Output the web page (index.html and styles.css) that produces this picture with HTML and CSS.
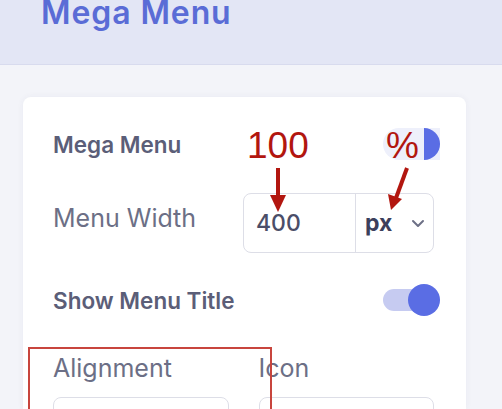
FILE: index.html
```html
<!DOCTYPE html>
<html lang="en">
<head>
    <meta charset="UTF-8">
    <meta name="viewport" content="width=device-width, initial-scale=1.0">
    <title>Mega Menu</title>
    <link rel="stylesheet" href="styles.css">
</head>
<body>
    <div class="header">
        <h1>Mega Menu</h1>
    </div>
    <div class="content">
        <div class="card">
            <div class="row row-top">
                <span class="label-bold">Mega Menu</span>
                <span class="toggle toggle-half"><span class="knob"></span></span>
            </div>
            <div class="row row-width">
                <span class="label">Menu Width</span>
                <div class="input-group">
                    <span class="input-value">400</span>
                    <span class="input-unit">
                        <b>px</b>
                        <svg width="14" height="9" viewBox="0 0 14 9"><path d="M2 2l5 5 5-5" fill="none" stroke="#6d7086" stroke-width="2" stroke-linecap="round" stroke-linejoin="round"/></svg>
                    </span>
                </div>
            </div>
            <div class="row row-title">
                <span class="label-bold">Show Menu Title</span>
                <span class="toggle toggle-on"><span class="knob"></span></span>
            </div>
            <div class="fields">
                <div class="field">
                    <span class="label">Alignment</span>
                    <div class="select"></div>
                </div>
                <div class="field">
                    <span class="label">Icon</span>
                    <div class="select"></div>
                </div>
            </div>
        </div>
    </div>

    <!-- annotations drawn over the screenshot -->
    <div class="note-box"></div>
    <span class="note note-100">100</span>
    <span class="note note-pct">%</span>
    <svg class="arrows" width="502" height="409" viewBox="0 0 502 409">
        <path d="M278 168v28" stroke="#b2160f" stroke-width="4"/>
        <path d="M270 195h16l-8 17z" fill="#b2160f"/>
        <path d="M407 168l-11 30" stroke="#b2160f" stroke-width="4"/>
        <path d="M388 194l14 5-11 11z" fill="#b2160f"/>
    </svg>
</body>
</html>
```

FILE: styles.css
```css
body {
    margin: 0;
    padding: 0;
    background-color: #f3f4f9;
    font-family: Inter, Roboto, sans-serif;
    overflow: hidden;
    height: 409px;
}
.header {
    height: 64px;
    padding: 0 41px;
    background-color: #e3e6f5;
    border-bottom: 1px solid #d8dbee;
    overflow: hidden;
}
.header h1 {
    margin: -2px 0 0;
    font-size: 32px;
    line-height: 30px;
    font-weight: 600;
    letter-spacing: 0.9px;
    color: #5a6cd6;
}
.content {
    padding: 32px 36px 0 23px;
}
.card {
    background-color: #ffffff;
    border-radius: 8px 8px 0 0;
    box-shadow: 0 0 6px rgba(60, 70, 120, 0.06);
    padding: 28px 26px 0 30px;
    height: 312px;
    box-sizing: border-box;
    overflow: hidden;
}
.row {
    display: flex;
    align-items: center;
    justify-content: space-between;
}
.row-top {
    height: 38px;
}
.row-width {
    margin-top: 30px;
    height: 60px;
}
.row-title {
    margin-top: 31px;
    height: 32px;
}
.label-bold {
    font-size: 22.5px;
    font-weight: 600;
    color: #5b5e78;
}
.label {
    font-size: 25px;
    line-height: 30px;
    color: #6c6f86;
}
.row-width .label {
    padding-bottom: 10px;
}
.toggle {
    position: relative;
    display: block;
    width: 57px;
    height: 32px;
}
.toggle-half {
    background-color: #eef0fb;
    border-radius: 16px 0 0 16px;
}
.toggle-half .knob {
    position: absolute;
    right: 0;
    top: 0;
    width: 16px;
    height: 32px;
    border-radius: 0 16px 16px 0;
    background-color: #5a6de4;
}
.toggle-on::before {
    content: '';
    position: absolute;
    left: 0;
    top: 5px;
    width: 40px;
    height: 22px;
    border-radius: 11px;
    background-color: #c6cbf1;
}
.toggle-on .knob {
    position: absolute;
    right: 0;
    top: 0;
    width: 32px;
    height: 32px;
    border-radius: 50%;
    background-color: #5a6de4;
}
.input-group {
    display: flex;
    width: 191px;
    height: 60px;
    margin-right: 6px;
    box-sizing: border-box;
    border: 1.5px solid #dddee7;
    border-radius: 8px;
}
.input-value {
    width: 112px;
    padding-left: 12px;
    box-sizing: border-box;
    display: flex;
    align-items: center;
    font-size: 23px;
    font-weight: 500;
    color: #4b4e68;
    border-right: 1.5px solid #dddee7;
}
.input-unit {
    flex: 1;
    display: flex;
    align-items: center;
    justify-content: space-between;
    padding: 0 8px 0 9px;
}
.input-unit b {
    font-size: 23px;
    font-weight: 700;
    color: #3c3f5c;
}
.fields {
    display: grid;
    grid-template-columns: 1fr 1fr;
    column-gap: 30px;
    margin-top: 37px;
    padding-right: 6px;
}
.field {
    display: flex;
    flex-direction: column;
    gap: 14px;
}
.select {
    height: 50px;
    border: 1.5px solid #dddee7;
    border-radius: 8px;
}
.note-box {
    position: absolute;
    left: 28px;
    top: 347px;
    width: 240px;
    height: 62px;
    border: 2px solid #c8453d;
    border-bottom: none;
}
.note {
    position: absolute;
    font-family: "Liberation Sans", Arial, sans-serif;
    font-size: 37px;
    line-height: 37px;
    color: #b2160f;
}
.note-100 {
    left: 247px;
    top: 127px;
}
.note-pct {
    left: 386px;
    top: 127px;
}
.arrows {
    position: absolute;
    left: 0;
    top: 0;
}
```
